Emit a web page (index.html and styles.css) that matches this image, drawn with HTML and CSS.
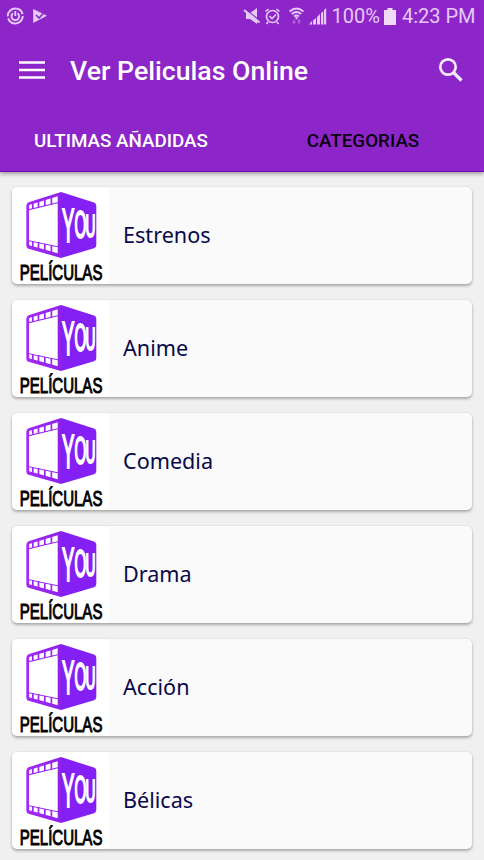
FILE: index.html
```html
<!DOCTYPE html>
<html lang="es">
<head>
<meta charset="utf-8">
<title>Ver Peliculas Online</title>
<link rel="stylesheet" href="styles.css">
</head>
<body>
<svg class="defs" width="0" height="0" aria-hidden="true">
  <defs>
    <linearGradient id="side" x1="0" y1="0" x2="1" y2="0"><stop offset="0" stop-color="#a32bf6"/><stop offset="1" stop-color="#8d22ea"/></linearGradient>
    <symbol id="logo" viewBox="0 0 97 97">
      <path d="M49 5 16.500 15.300Q14.300 16.200 14.300 19V58.500Q14.300 61 16.500 61.700L49 71Z" fill="url(#side)"/>
      <path d="M49 5 82 15.600Q84.300 16.600 84.300 19V58Q84.300 60.500 82 61.300L49 71Z" fill="#8420f3"/>
      <path d="M17 23.300 45.700 16.200V59.200L17 53.200ZM17.200 18 45.700 9.200V15.200L17.200 22ZM17.200 54.200 45.700 60.300V66.300L17.200 58.200Z" fill="#fff"/>
      <path d="M20.800 16V22M26.500 14V20.500M32.800 12V19M39.400 10V17.500M20.800 54V60M26.500 55V62M32.800 57V64M39.400 58V65" stroke="#9728ed" stroke-width="1.700"/>
      <g class="logo-face">
        <text transform="translate(49.900 54.500) scale(.38 1)" font-size="49">Y</text>
        <text transform="translate(62.400 51.300) scale(.4 1)" font-size="38">O</text>
        <text transform="translate(73.400 49.800) scale(.43 1)" font-size="32">U</text>
      </g>
      <text class="logo-name" transform="translate(7.800 92.800) scale(.7 1)" font-size="21.500" textLength="118" lengthAdjust="spacingAndGlyphs">PELÍCULAS</text>
    </symbol>
  </defs>
</svg>
<header class="header">
  <div class="status">
    <svg width="50" height="32" viewBox="0 0 50 32" fill="none">
      <circle cx="15.300" cy="16" r="7.500" stroke="#e5c9f4" stroke-width="2" stroke-dasharray="21 2 22 2"/>
      <path d="M13 13.200A3.800 3.800 0 1 0 17.600 13.200M15.300 11V16" stroke="#e5c9f4" stroke-width="1.900"/>
      <path d="M33.200 9 47 15.800 33.200 23Z" fill="#e5c9f4"/>
      <path d="m36 15 3 3 6-6.500" stroke="#8c26c9" stroke-width="1.600"/>
    </svg>
    <div class="status-right">
      <svg width="86" height="32" viewBox="242 0 86 32" fill="none" stroke="#e5c9f4">
        <path d="M246 13H250L257 8V24L250 19H246Z" fill="#e5c9f4" stroke="none"/>
        <path d="M244 8.500 261 21.500" stroke="#8c26c9" stroke-width="1.500"/>
        <path d="M244 10 259.500 22.500" stroke-width="2.200"/>
        <circle cx="272.500" cy="16.500" r="6" stroke-width="1.700"/>
        <path d="m269.500 16 2.500 2.500 4-4M265.500 11.500l3-2.500M279.500 11.500l-3-2.500M268 22l-1.500 2M277 22l1.500 2" stroke-width="1.600"/>
        <path d="M289.500 11.500Q296.500 5.500 303.500 11.500M291.800 14Q296.500 10 301.200 14M294 16.500Q296.500 14.500 299 16.500" stroke-width="1.800"/>
        <circle cx="296.500" cy="18" r="1.200" fill="#e5c9f4" stroke="none"/>
        <path d="M294 19.500V23M292.500 21.500l1.500 2 1.500-2M299 24V20.500M297.500 21.500l1.500-2 1.500 2" stroke="#b878dd"/>
        <path d="M309 24.500 312 21V24.500ZM313 20.500 316 18V24.500H313ZM317 17l3-3V24.500H317ZM321 13l2.300-1.800V24.500H321ZM324 10l2.200-2V24.500H324Z" fill="#e5c9f4" stroke="none"/>
      </svg>
      <span class="battery-text">100%</span>
      <svg class="battery" width="12" height="17" viewBox="0 0 12 17"><path d="M3.500 0h5v2H12v15H0V2h3.500Z" fill="#efdaf8"/></svg>
      <span class="clock">4:23 PM</span>
    </div>
  </div>
  <div class="toolbar">
    <svg width="26" height="18" viewBox="0 0 26 18"><path d="M0 1.500H26M0 9H26M0 16.500H26" stroke="#fff" stroke-width="2.600"/></svg>
    <h1>Ver Peliculas Online</h1>
    <svg class="search" width="26" height="26" viewBox="0 0 26 26" fill="none" stroke="#f6eafb"><circle cx="10" cy="10" r="7.700" stroke-width="2.700"/><path d="m15.500 15.500 8 8" stroke-width="3.200"/></svg>
  </div>
  <nav class="tabs"><span class="tab">ULTIMAS AÑADIDAS</span><span class="tab tab-dark">CATEGORIAS</span></nav>
</header>
<main class="list">
  <div class="card"><svg class="thumb"><use href="#logo"/></svg><span>Estrenos</span></div>
  <div class="card"><svg class="thumb"><use href="#logo"/></svg><span>Anime</span></div>
  <div class="card"><svg class="thumb"><use href="#logo"/></svg><span>Comedia</span></div>
  <div class="card"><svg class="thumb"><use href="#logo"/></svg><span>Drama</span></div>
  <div class="card"><svg class="thumb"><use href="#logo"/></svg><span>Acción</span></div>
  <div class="card"><svg class="thumb"><use href="#logo"/></svg><span>Bélicas</span></div>
</main>
</body>
</html>
```
FILE: styles.css
```css
* { box-sizing: border-box; }
body { margin: 0; height: 860px; overflow: hidden; background: #f0f0f0; font-family: Roboto, sans-serif; }
svg { display: block; flex: none; }
.defs { position: absolute; }
.header { height: 172px; background: #8c26c9; border-bottom: 1px solid #7609b5; box-shadow: 0 2px 4px rgba(0,0,0,.35); }
.status { height: 32px; display: flex; justify-content: space-between; color: #e5c9f4; font-size: 20px; }
.status-right { display: flex; align-items: center; padding-right: 8.5px; white-space: nowrap; }
.battery-text { margin-left: 4px; line-height: 34px; }
.battery { margin: 0 6px 0 4px; }
.clock { line-height: 34px; }
.toolbar { height: 76px; display: flex; align-items: center; padding: 0 20px 0 19px; }
.toolbar h1 { margin: 2px 0 0 25px; font-size: 26.7px; line-height: 32px; font-weight: 500; color: #fff; white-space: nowrap; }
.search { margin-left: auto; }
.tabs { display: grid; grid-template-columns: 1fr 1fr; height: 63px; padding-top: 2px; }
.tab { display: flex; align-items: center; justify-content: center; font-size: 18.8px; font-weight: 500; color: #fff; }
.tab-dark { color: #09000f; }
.list { display: flex; flex-direction: column; gap: 16px; padding: 15px 12.500px 0 12px; }
.card { height: 97px; flex: none; display: flex; align-items: center; overflow: hidden; background: #fafafa; border-radius: 5px; box-shadow: 0 2px 3px rgba(0,0,0,.28), 0 0 2px rgba(0,0,0,.12); font: 21.600px "Noto Sans", sans-serif; color: #09094a; }
.card span { margin: -3px 0 0 14px; }
.thumb { width: 97px; height: 97px; background: #fff; border-radius: 5px; }
.logo-face { font-family: "Liberation Sans", sans-serif; fill: #fff; stroke: #fff; stroke-width: 2.2px; }
.logo-name { font-family: "Liberation Sans", sans-serif; fill: #000; stroke: #000; stroke-width: 1px; }
```
